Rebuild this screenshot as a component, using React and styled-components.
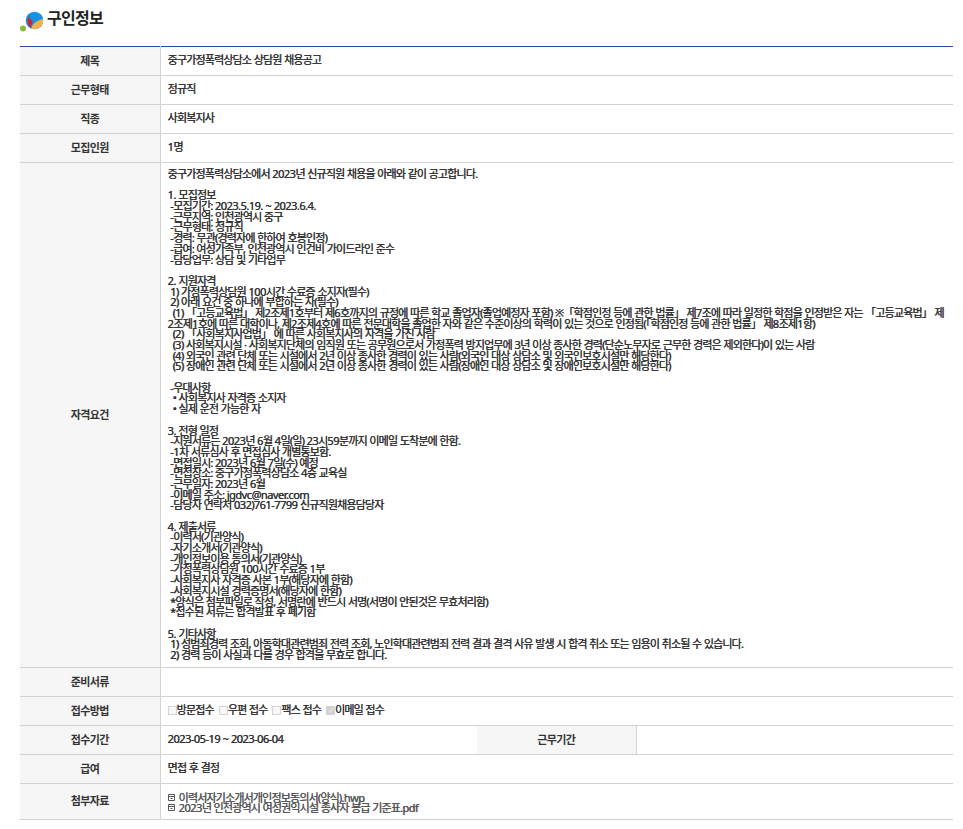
import React from "react";
import styled, { createGlobalStyle } from "styled-components";

const Global = createGlobalStyle`
  html, body { margin: 0; padding: 0; background: #fff; }
  body { font-family: "Noto Sans", "Noto Sans CJK KR", sans-serif; color: #333; }
`;
const Page = styled.div`
  width: 963px;
  height: 829px;
  overflow: hidden;
  padding: 0 10px 0 20px;
  box-sizing: border-box;
`;
const Heading = styled.h2`
  display: flex;
  align-items: center;
  gap: 3px;
  height: 46px;
  margin: 0;
  padding-bottom: 10px;
  box-sizing: border-box;
  font-size: 16px;
  font-weight: 700;
  letter-spacing: -0.7px;
  color: #222;
  line-height: 1;
`;
const LogoMark = styled.svg`
  width: 24px;
  height: 22px;
  margin-top: 6px;
  flex: none;
`;
const Table = styled.table`
  width: 933px;
  border-collapse: collapse;
  table-layout: fixed;
  border-top: 1px solid #1d4f9e;
  font-size: 11px;
  letter-spacing: -0.84px;
  word-spacing: 0.5px;
  text-shadow: 0.35px 0 0 currentColor;
`;
const Row = styled.tr`
  border-bottom: 1px solid #d2d2d2;
`;
const Label = styled.th`
  background: #f6f6f6;
  color: #333;
  font-weight: 700;
  font-size: 11px;
  letter-spacing: -0.6px;
  text-shadow: none;
  text-align: center;
  padding: 0 0 3px;
  height: ${(p) => p.$h || 29}px;
  box-sizing: border-box;
  border-right: 1px solid #d2d2d2;
`;
const Value = styled.td`
  padding: 0 7px 2px;
  height: ${(p) => p.$h || 29}px;
  box-sizing: border-box;
  color: #333;
  font-weight: 400;
  line-height: 12px;
`;
const Pre = styled.div`
  white-space: pre;
  line-height: 10.68px;
  padding: 6px 0 4.7px;
`;
const Latin = styled.span`
  display: inline-block;
  letter-spacing: -0.5px;
`;
const Checks = styled.div`
  display: flex;
  align-items: center;
  gap: 5px;
`;
const Check = styled.label`
  display: inline-flex;
  align-items: center;
`;
const Box = styled.span`
  display: inline-block;
  width: 7px;
  height: 7px;
  border: 1px solid #d4d4d4;
  background: ${(p) => (p.$on ? "#d0d0d0" : "#f8f8f8")};
  font-size: 7px;
  line-height: 7px;
  color: #f4f4f4;
  text-align: center;
  overflow: hidden;
  text-shadow: none;
`;
const Files = styled.div`
  display: flex;
  flex-direction: column;
  line-height: 10px;
  margin-top: 4px;
`;
const File = styled.a`
  display: flex;
  align-items: center;
  gap: 4px;
  color: #555;
  text-decoration: none;
  font-size: 11px;
  white-space: pre;
`;

const Mixed = ({ children }) =>
  children
    .split(/([A-Za-z0-9@.\-~]+)/)
    .map((part, i) => (i % 2 ? <Latin key={i}>{part}</Latin> : part));

const Logo = () => (
  <LogoMark viewBox="0 0 24 22">
    <circle cx="3" cy="18.5" r="3" fill="#8bb93a" />
    <circle cx="14.5" cy="10.5" r="8.8" fill="#1593e0" />
    <path d="M23 9 A8.8 8.8 0 0 1 11 18.6 C 13 13.5 17 10 23 9Z" fill="#f8b04a" />
    <path d="M8.8 6.3 C 7 9.5 7.2 14.5 10.6 18.1 C 11 14.5 12.5 12.5 13 11.5 C 11 10.5 9.5 8.5 8.8 6.3Z" fill="#d9202a" />
  </LogoMark>
);
const Clip = () => (
  <svg width="7" height="7" viewBox="0 0 7 7" fill="none" stroke="#555" strokeWidth="1">
    <path d="M.5 .5h6v6h-6z M.5 2.5h6 M2.5 4.5h2" />
  </svg>
);

const body = `중구가정폭력상담소에서 2023년 신규직원 채용을 아래와 같이 공고합니다.

1. 모집정보
 -모집기간: 2023.5.19. ~ 2023.6.4.
 -근무지역: 인천광역시 중구
 -근무형태: 정규직
 -경력: 무관(경력자에 한하여 호봉인정)
 -급여: 여성가족부, 인천광역시 인건비 가이드라인 준수
 -담당업무: 상담 및 기타업무

2. 지원자격
 1) 가정폭력상담원 100시간 수료증 소지자(필수)
 2) 아래 요건 중 하나에 부합하는 자(필수)
  (1) 「고등교육법」 제2조제1호부터 제6호까지의 규정에 따른 학교 졸업자(졸업예정자 포함) ※「학점인정 등에 관한 법률」 제7조에 따라 일정한 학점을 인정받은 자는 「고등교육법」 제
2조제1호에 따른 대학이나, 제2조제4호에 따른 전문대학을 졸업한 자와 같은 수준이상의 학력이 있는 것으로 인정됨(「학점인정 등에 관한 법률」 제8조제1항)
  (2) 「사회복지사업법」 에 따른 사회복지사의 자격을 가진 사람
  (3) 사회복지시설 · 사회복지단체의 임직원 또는 공무원으로서 가정폭력 방지업무에 3년 이상 종사한 경력(단순노무자로 근무한 경력은 제외한다)이 있는 사람
  (4) 외국인 관련 단체 또는 시설에서 2년 이상 종사한 경력이 있는 사람(외국인 대상 상담소 및 외국인보호시설만 해당한다)
  (5) 장애인 관련 단체 또는 시설에서 2년 이상 종사한 경력이 있는 사람(장애인 대상 상담소 및 장애인보호시설만 해당한다)

 -우대사항
  • 사회복지사 자격증 소지자
  • 실제 운전 가능한 자

3. 전형 일정
 -지원서류는 2023년 6월 4일(일) 23시59분까지 이메일 도착분에 한함.
 -1차 서류심사 후 면접심사 개별통보함.
 -면접일시: 2023년 6월 7일(수) 예정
 -면접장소: 중구가정폭력상담소 4층 교육실
 -근무일자: 2023년 6월
 -이메일 주소: jgdvc@naver.com
 -담당자 연락처 032)761-7799 신규직원채용담당자

4. 제출서류
 -이력서(기관양식)
 -자기소개서(기관양식)
 -개인정보이용 동의서(기관양식)
 -가정폭력상담원 100시간 수료증 1부
 -사회복지사 자격증 사본 1부(해당자에 한함)
 -사회복지시설 경력증명서(해당자에 한함)
 *양식은 첨부파일로 작성, 서명란에 반드시 서명(서명이 안된것은 무효처리함)
 *접수된 서류는 합격발표 후 폐기함

5. 기타사항
 1) 성범죄경력 조회, 아동학대관련범죄 전력 조회, 노인학대관련범죄 전력 결과 결격 사유 발생 시 합격 취소 또는 임용이 취소될 수 있습니다.
 2) 경력 등이 사실과 다를 경우 합격을 무효로 합니다.`;

export default function App() {
  return (
    <Page>
      <Global />
      <Heading>
        <Logo />
        구인정보
      </Heading>
      <Table>
        <colgroup>
          <col style={{ width: 140 }} />
          <col style={{ width: 317 }} />
          <col style={{ width: 159 }} />
          <col />
        </colgroup>
        <tbody>
          <Row><Label>제목</Label><Value colSpan={3}>중구가정폭력상담소 상담원 채용공고</Value></Row>
          <Row><Label>근무형태</Label><Value colSpan={3}>정규직</Value></Row>
          <Row><Label>직종</Label><Value colSpan={3}>사회복지사</Value></Row>
          <Row><Label>모집인원</Label><Value colSpan={3}><Mixed>1명</Mixed></Value></Row>
          <Row>
            <Label>자격요건</Label>
            <Value colSpan={3}><Pre><Mixed>{body}</Mixed></Pre></Value>
          </Row>
          <Row><Label>준비서류</Label><Value colSpan={3} /></Row>
          <Row>
            <Label>접수방법</Label>
            <Value colSpan={3}>
              <Checks>
                <Check><Box />방문접수</Check>
                <Check><Box />우편 접수</Check>
                <Check><Box />팩스 접수</Check>
                <Check><Box $on>✓</Box>이메일 접수</Check>
              </Checks>
            </Value>
          </Row>
          <Row>
            <Label>접수기간</Label>
            <Value><Mixed>2023-05-19 ~ 2023-06-04</Mixed></Value>
            <Label>근무기간</Label>
            <Value />
          </Row>
          <Row><Label>급여</Label><Value colSpan={3}>면접 후 결정</Value></Row>
          <Row>
            <Label $h={36}>첨부자료</Label>
            <Value colSpan={3} $h={36}>
              <Files>
                <File><Clip /><span><Mixed>이력서자기소개서개인정보동의서(양식).hwp</Mixed></span></File>
                <File><Clip /><span><Mixed>2023년 인천광역시 여성권익시설 종사자 봉급 기준표.pdf</Mixed></span></File>
              </Files>
            </Value>
          </Row>
        </tbody>
      </Table>
    </Page>
  );
}
